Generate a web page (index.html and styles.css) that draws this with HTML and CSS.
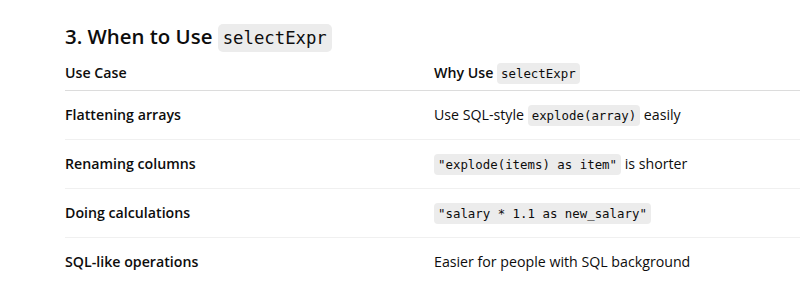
FILE: index.html
```html
<!DOCTYPE html>
<html lang="en">
<head>
  <meta charset="UTF-8">
  <title>When to Use selectExpr</title>
  <link rel="stylesheet" href="styles.css">
</head>
<body>
<main class="doc">
  <h3>3. When to Use <code>selectExpr</code></h3>

  <table class="tabela">
    <thead>
      <tr>
        <th>Use Case</th>
        <th>Why Use <code>selectExpr</code></th>
      </tr>
    </thead>
    <tbody>
      <tr>
        <td><strong>Flattening arrays</strong></td>
        <td>Use SQL-style <code>explode(array)</code> easily</td>
      </tr>
      <tr>
        <td><strong>Renaming columns</strong></td>
        <td><code>"explode(items) as item"</code> is shorter</td>
      </tr>
      <tr>
        <td><strong>Doing calculations</strong></td>
        <td><code>"salary * 1.1 as new_salary"</code></td>
      </tr>
      <tr>
        <td><strong>SQL-like operations</strong></td>
        <td>Easier for people with SQL background</td>
      </tr>
    </tbody>
  </table>
</main>
</body>
</html>
```

FILE: styles.css
```css
body { font-family: 'Open Sans', 'Noto Sans', Arial, sans-serif; background: #fff; color: #0d0d0d; margin: 0; padding: 0; overflow: hidden; }
.doc { padding: 0 0 0 65px; width: 900px; }
h3 { font-size: 20.4px; font-weight: 600; margin: 22px 0 0; line-height: 28px; }
code { font-family: 'DejaVu Sans Mono', 'Liberation Mono', monospace; background: #ececec; border-radius: 4px; font-size: 12.4px; font-weight: 400; line-height: 1; padding: 3px 4px; }
h3 code { font-size: 17.3px; padding: 4px 5px; border-radius: 5px; }
.tabela { border-collapse: collapse; width: 800px; margin-top: 6px; font-size: 14.2px; }
.tabela th { text-align: left; font-weight: 600; padding: 5px 0 5px; line-height: 24px; border-bottom: 1px solid #dcdcdc; }
.tabela th:first-child, .tabela td:first-child { width: 369px; }
.tabela td { padding: 12px 0; line-height: 24px; border-bottom: 1px solid #f0f0f0; }
.tabela tr:last-child td { border-bottom: none; }
.tabela strong { font-weight: 600; }
```
